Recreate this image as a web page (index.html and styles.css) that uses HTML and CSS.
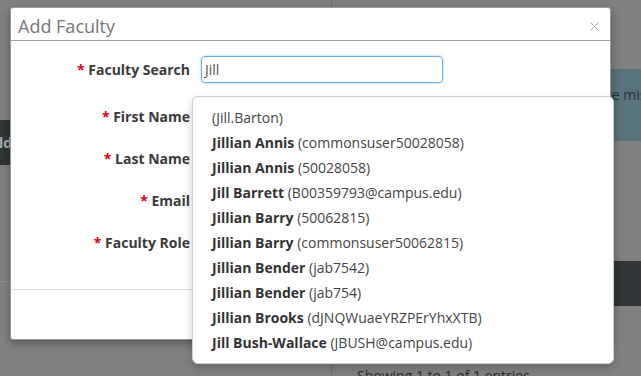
FILE: index.html
```html
<!DOCTYPE html>
<html>
<head>
<meta charset="utf-8">
<link rel="stylesheet" href="styles.css">
</head>
<body>
<div class="page">
  <aside class="side">
    <div class="side-top"></div>
    <div class="side-bar">ld</div>
    <div class="side-mid"></div>
  </aside>
  <main class="main">
    <div class="main-top"></div>
    <div class="alert">You have missing faculty assignments.</div>
    <div class="main-mid"></div>
    <div class="dark-bar"></div>
    <div class="main-gap"></div>
    <div class="info">Showing 1 to 1 of 1 entries</div>
  </main>
</div>

<div class="modal">
  <div class="modal-header">
    <span class="modal-title">Add Faculty</span>
    <svg class="close" width="9" height="9" viewBox="0 0 9 9"><path d="M0.5 0.5 L8.5 8.5 M8.5 0.5 L0.5 8.5" stroke="#a8a8a8" stroke-width="1" fill="none"/></svg>
  </div>
  <div class="modal-body">
    <div class="row first">
      <label class="lbl"><span class="req">*</span> Faculty Search</label>
      <div class="input focus">Jill</div>
    </div>
    <div class="row">
      <label class="lbl"><span class="req">*</span> First Name</label>
      <div class="input"></div>
    </div>
    <div class="row">
      <label class="lbl"><span class="req">*</span> Last Name</label>
      <div class="input"></div>
    </div>
    <div class="row">
      <label class="lbl"><span class="req">*</span> Email</label>
      <div class="input"></div>
    </div>
    <div class="row">
      <label class="lbl"><span class="req">*</span> Faculty Role</label>
      <div class="input"></div>
    </div>
  </div>
  <div class="modal-footer"></div>
</div>

<ul class="menu">
  <li>(Jill.Barton)</li>
  <li><b>Jillian Annis</b> (commonsuser50028058)</li>
  <li><b>Jillian Annis</b> (50028058)</li>
  <li><b>Jill Barrett</b> (B00359793@campus.edu)</li>
  <li><b>Jillian Barry</b> (50062815)</li>
  <li><b>Jillian Barry</b> (commonsuser50062815)</li>
  <li><b>Jillian Bender</b> (jab7542)</li>
  <li><b>Jillian Bender</b> (jab754)</li>
  <li><b>Jillian Brooks</b> (dJNQWuaeYRZPErYhxXTB)</li>
  <li><b>Jill Bush-Wallace</b> (JBUSH@campus.edu)</li>
</ul>
</body>
</html>
```

FILE: styles.css
```css
* { box-sizing: border-box; }
html, body {
  margin: 0;
  padding: 0;
}
body {
  width: 641px;
  height: 376px;
  overflow: hidden;
  position: relative;
  background: #808080;
  font-family: "Open Sans", "Liberation Sans", sans-serif;
  font-size: 14px;
  color: #333;
}

/* dimmed page underneath */
.page {
  display: flex;
  height: 376px;
}
.side {
  flex: 0 0 332px;
  width: 332px;
  border-right: 1px solid #6e6e6e;
  display: flex;
  flex-direction: column;
}
.side > *, .main > * { flex-shrink: 0; }
.side-top { height: 120px; }
.side-bar {
  height: 45px;
  background: #2f3536;
  color: #a9adae;
  font-weight: 700;
  line-height: 45px;
  text-indent: -1px;
}
.side-mid {
  height: 117px;
  border-bottom: 1px solid #8e8e8e;
}
.main {
  flex: 1 1 auto;
  min-width: 0;
  display: flex;
  flex-direction: column;
}
.main-top { height: 69px; }
.alert {
  height: 72px;
  background: #58737b;
  color: #22343a;
  font-size: 14px;
  padding: 16px 0 0 228px;
  line-height: 20px;
  white-space: nowrap;
  overflow: hidden;
}
.main-mid { height: 120px; }
.dark-bar {
  height: 45px;
  background: #303637;
}
.main-gap { height: 60px; }
.info {
  line-height: 20px;
  padding-left: 25px;
  color: #2a2a2a;
  white-space: nowrap;
}

/* modal */
.modal {
  position: absolute;
  left: 10px;
  top: 7px;
  width: 601px;
  height: 333px;
  background: #fff;
  border: 1px solid #9a9a9a;
  border-radius: 3px;
  box-shadow: 0 3px 9px rgba(0,0,0,0.35);
  display: flex;
  flex-direction: column;
}
.modal-header {
  height: 33px;
  border-bottom: 1px solid #a2a2a2;
  padding: 4px 10px 0 7px;
  display: flex;
  align-items: center;
  justify-content: space-between;
}
.modal-title {
  font-size: 18px;
  line-height: 29px;
  color: #777;
}
.close {
  margin-top: 1px;
  margin-right: 1px;
}
.modal-body {
  padding: 15px 0 33px;
  display: flex;
  flex-direction: column;
  gap: 15px;
}
.row {
  display: grid;
  grid-template-columns: 179px 242px;
  column-gap: 11px;
  height: 27px;
}
.row.first { margin-bottom: 5px; }
.lbl {
  text-align: right;
  font-weight: 700;
  line-height: 27px;
  color: #3a3a3a;
  white-space: nowrap;
}
.req { color: #d9001b; }
.input {
  height: 27px;
  border: 1px solid #ccc;
  border-radius: 4px;
  padding: 0 3px;
  line-height: 25px;
  color: #555;
}
.input.focus {
  border-color: #66afe9;
  box-shadow: 0 0 3px rgba(102,175,233,0.6);
}
.modal-footer {
  flex: 1;
  border-top: 1px solid #dedede;
}

/* autocomplete menu */
.menu {
  position: absolute;
  left: 192px;
  top: 96px;
  width: 422px;
  margin: 0;
  padding: 8px 0;
  list-style: none;
  background: #fff;
  border: 1px solid #cfcfcf;
  border-radius: 6px;
  box-shadow: 0 4px 10px rgba(0,0,0,0.2);
}
.menu li {
  padding: 0 19px;
  line-height: 25px;
  color: #444;
  white-space: nowrap;
}
.menu b {
  font-weight: 700;
  color: #333;
}
```
